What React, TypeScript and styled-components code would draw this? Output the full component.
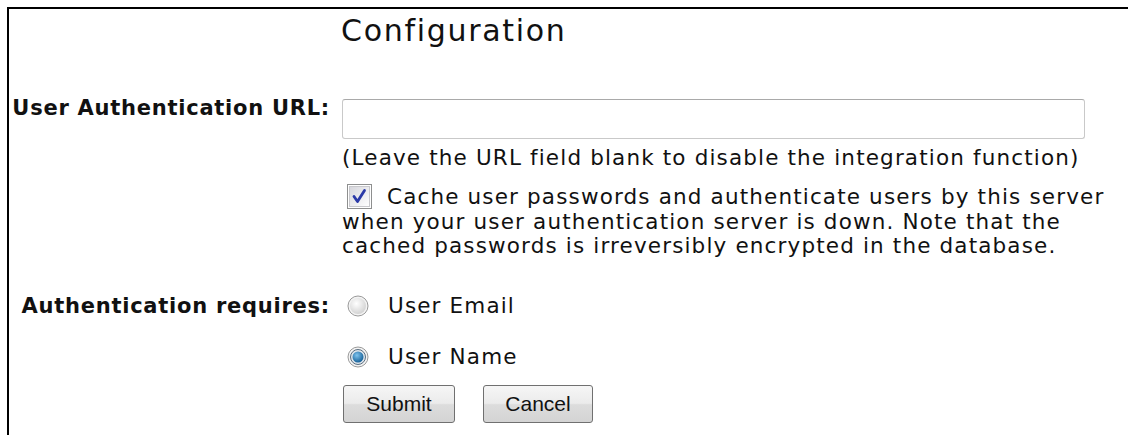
import * as React from 'react';
import styled, { createGlobalStyle } from 'styled-components';

const GlobalStyle = createGlobalStyle`
  html, body {
    margin: 0;
    padding: 0;
    background: #fff;
  }
  body {
    font-family: 'DejaVu Sans', Verdana, sans-serif;
    color: #111;
  }
`;

const Frame = styled.div`
  margin: 7px 0 0 7px;
  border-top: 2px solid #000;
  border-left: 2px solid #000;
  height: 428px;
  box-sizing: border-box;
`;

const Form = styled.form`
  display: grid;
  grid-template-columns: 333px 780px;
  align-items: start;
`;

const Heading = styled.h2`
  grid-column: 2;
  margin: 4px 0 0 -1px;
  font-weight: normal;
  font-size: 30px;
  letter-spacing: 1.7px;
  line-height: 36px;
  height: 86px;
`;

const Label = styled.label<{ $shift?: number }>`
  grid-column: 1;
  text-align: right;
  padding-right: 12px;
  margin-top: ${(p) => p.$shift ?? 0}px;
  font-weight: bold;
  font-size: 21px;
  letter-spacing: 0.75px;
  line-height: 24px;
  white-space: nowrap;
`;

const Field = styled.div`
  grid-column: 2;
  display: flex;
  flex-direction: column;
`;

const UrlInput = styled.input`
  width: 743px;
  height: 40px;
  box-sizing: border-box;
  border: 1px solid #c9c9c9;
  border-top-color: #a9a9a9;
  border-radius: 3px;
  padding: 0 6px;
  font: inherit;
`;

const Copy = styled.div`
  font-size: 21.5px;
  letter-spacing: 1.15px;
  white-space: nowrap;
`;

const Hint = styled(Copy)`
  line-height: 24px;
  margin-top: 7px;
`;

const CacheNote = styled(Copy)`
  line-height: 24.5px;
  margin-top: 14px;
  margin-bottom: 35px;
`;

const Choice = styled(Copy).attrs({ as: 'label' })<{ $gap?: number }>`
  display: flex;
  align-items: center;
  gap: 19px;
  padding-left: 5px;
  line-height: 24px;
  margin-bottom: ${(p) => p.$gap ?? 0}px;
`;

const Check = styled.span`
  display: inline-block;
  vertical-align: -5px;
  margin: 0 15px 0 5px;
  width: 25px;
  height: 25px;
`;

const Buttons = styled.div`
  display: flex;
  gap: 28px;
  padding-left: 1px;
`;

const Button = styled.button<{ $w: number }>`
  width: ${(p) => p.$w}px;
  height: 38px;
  font-family: 'Liberation Sans', Arial, sans-serif;
  font-size: 21px;
  color: #111;
  border: 1px solid #707070;
  border-radius: 3px;
  background: linear-gradient(#f6f6f6 0%, #ebebeb 48%, #dcdcdc 52%, #d4d4d4 100%);
  padding: 0;
`;

const CheckBox = () => (
  <Check>
    <svg width="25" height="25" viewBox="0 0 25 25">
      <defs>
        <linearGradient id="cbFill" x1="0" y1="0" x2="1" y2="1">
          <stop offset="0" stopColor="#d6d6dc" />
          <stop offset="1" stopColor="#ffffff" />
        </linearGradient>
      </defs>
      <rect x="0.5" y="0.5" width="24" height="24" fill="#fff" stroke="#8e8f8f" />
      <rect x="2.5" y="2.5" width="20" height="20" fill="url(#cbFill)" stroke="#c8c8cc" />
      <path d="M7 12.5 L10.5 17.5 L17.5 6.5" fill="none" stroke="#2b3aa8" strokeWidth="2.8" strokeLinecap="round" strokeLinejoin="round" />
    </svg>
  </Check>
);

const Radio = ({ on }: { on?: boolean }) => (
  <svg width="22" height="22" viewBox="0 0 22 22">
    <defs>
      <radialGradient id={on ? 'rOn' : 'rOff'} cx="0.4" cy="0.35" r="0.7">
        <stop offset="0" stopColor={on ? '#7fc4ee' : '#ffffff'} />
        <stop offset="1" stopColor={on ? '#0f5a93' : '#d0d0d0'} />
      </radialGradient>
    </defs>
    <circle cx="11" cy="11" r="10" fill="#f3f3f3" stroke="#9a9a9a" />
    {on ? (
      <>
        <circle cx="11" cy="11" r="7.5" fill="#dfe6ec" stroke="#5a6e80" strokeWidth="1" />
        <circle cx="11" cy="11" r="5.5" fill="url(#rOn)" />
      </>
    ) : (
      <circle cx="11" cy="11" r="8" fill="url(#rOff)" />
    )}
  </svg>
);

export default function App() {
  return (
    <>
      <GlobalStyle />
      <Frame>
        <Form>
          <Heading>Configuration</Heading>

          <Label $shift={-3}>User Authentication URL:</Label>
          <Field>
            <UrlInput type="text" />
            <Hint>(Leave the URL field blank to disable the integration function)</Hint>
            <CacheNote>
              <CheckBox />
              Cache user passwords and authenticate users by this server
              <br />
              when your user authentication server is down. Note that the
              <br />
              cached passwords is irreversibly encrypted in the database.
            </CacheNote>
          </Field>

          <Label>Authentication requires:</Label>
          <Field>
            <Choice $gap={27}>
              <Radio />
              User Email
            </Choice>
            <Choice $gap={16}>
              <Radio on />
              User Name
            </Choice>
            <Buttons>
              <Button type="button" $w={112}>Submit</Button>
              <Button type="button" $w={110}>Cancel</Button>
            </Buttons>
          </Field>
        </Form>
      </Frame>
    </>
  );
}
